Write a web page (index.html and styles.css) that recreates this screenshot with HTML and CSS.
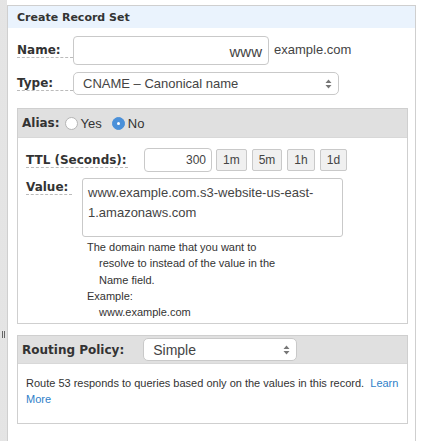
FILE: index.html
```html
<!DOCTYPE html>
<html>
<head>
<meta charset="utf-8">
<link rel="stylesheet" href="styles.css">
</head>
<body>
<div class="page">
  <div class="strip"><span class="grip"></span></div>
  <div class="panel">
    <div class="panel-head">Create Record Set</div>
    <div class="panel-body">
      <div class="row row-name">
        <span class="lbl lbl-main">Name:</span>
        <div class="input name-input">www</div>
        <span class="suffix">example.com</span>
      </div>
      <div class="row row-type">
        <span class="lbl lbl-main">Type:</span>
        <div class="select type-select"><span>CNAME – Canonical name</span><span class="arrows"><svg width="7" height="10" viewBox="0 0 7 10"><path d="M3.5 0.5 L6.5 4 H0.5 Z M3.5 9.5 L6.5 6 H0.5 Z" fill="#777"/></svg></span></div>
      </div>
      <div class="box alias-box">
        <div class="box-head">
          <span class="lbl">Alias:</span>
          <span class="radio"></span><span class="rtext">Yes</span>
          <span class="radio on"></span><span class="rtext">No</span>
        </div>
        <div class="box-body">
          <div class="row row-ttl">
            <span class="lbl ttl-lbl">TTL (Seconds):</span>
            <div class="input ttl-input">300</div>
            <div class="btns">
              <span class="btn">1m</span><span class="btn">5m</span><span class="btn">1h</span><span class="btn">1d</span>
            </div>
          </div>
          <div class="row row-value">
            <span class="lbl value-lbl">Value:</span>
            <div class="value-col">
              <div class="textarea">www.example.com.s3-website-us-east-<br>1.amazonaws.com</div>
              <div class="help">
                <p>The domain name that you want to</p>
                <p class="ind">resolve to instead of the value in the</p>
                <p class="ind">Name field.</p>
                <p>Example:</p>
                <p class="ind">www.example.com</p>
              </div>
            </div>
          </div>
        </div>
      </div>
      <div class="box routing-box">
        <div class="box-head routing-head">
          <span class="lbl">Routing Policy:</span>
          <div class="select routing-select"><span>Simple</span><span class="arrows"><svg width="7" height="10" viewBox="0 0 7 10"><path d="M3.5 0.5 L6.5 4 H0.5 Z M3.5 9.5 L6.5 6 H0.5 Z" fill="#777"/></svg></span></div>
        </div>
        <div class="routing-text">Route 53 responds to queries based only on the values in this record.&nbsp; <a class="link">Learn</a> <a class="link">More</a></div>
      </div>
    </div>
  </div>
</div>
</body>
</html>
```
FILE: styles.css
```css
html, body {
  margin: 0;
  padding: 0;
  background: #fff;
}
.page {
  display: flex;
  width: 423px;
  height: 441px;
  overflow: hidden;
  font-family: "Liberation Sans", Arial, sans-serif;
  color: #333;
}
.strip {
  width: 7px;
  flex: none;
  position: relative;
  background-color: #f3f3f3;
  background-image: radial-gradient(#dcdcdc 0.6px, transparent 0.9px);
  background-size: 2px 2px;
}
.grip {
  position: absolute;
  left: 2px;
  top: 331px;
  width: 1px;
  height: 7px;
  border-left: 1px solid #666;
  border-right: 1px solid #666;
}
.panel {
  margin-top: 5px;
  width: 407px;
  flex: none;
  border: 1px solid #cfcfcf;
  border-bottom: none;
}
.panel-head {
  height: 22px;
  background: #eaf3fd;
  font-family: "DejaVu Sans", Verdana, sans-serif;
  font-weight: bold;
  font-size: 11px;
  color: #333;
  padding-left: 9px;
  line-height: 23px;
}
.panel-body {
  padding: 8px 7px 0 9px;
}
.row {
  display: flex;
  align-items: center;
}
.lbl {
  font-family: "DejaVu Sans", Verdana, sans-serif;
  font-weight: bold;
  font-size: 12px;
  color: #333;
  border-bottom: 1px dashed #bbb;
  line-height: 14px;
}
.lbl-main {
  width: 56px;
  flex: none;
}
.input {
  box-sizing: border-box;
  border: 1px solid #c9c9c9;
  border-radius: 4px;
  background: #fff;
  font-size: 13px;
  text-align: right;
  color: #444;
}
.name-input {
  width: 196px;
  height: 29px;
  line-height: 29px;
  padding-right: 6px;
  font-size: 15px;
}
.suffix {
  margin-left: 5px;
  font-size: 13px;
  color: #444;
  margin-top: -2px;
}
.row-type {
  margin-top: 7px;
}
.select {
  box-sizing: border-box;
  display: flex;
  justify-content: space-between;
  align-items: center;
  border: 1px solid #c9c9c9;
  border-radius: 5px;
  background: #fff;
  font-size: 13px;
  color: #444;
  padding: 0 6px 0 9px;
}
.type-select {
  width: 266px;
  height: 23px;
}
.arrows {
  display: flex;
}
.box {
  border: 1px solid #cfcfcf;
  box-sizing: border-box;
  width: 391px;
}
.alias-box {
  margin-top: 13px;
  height: 216px;
}
.box-head {
  display: flex;
  align-items: center;
  height: 29px;
  padding-left: 4px;
  background-color: #ececec;
  background-image: radial-gradient(#dadada 0.6px, transparent 0.9px);
  background-size: 2px 2px;
  border-bottom: 1px solid #d8d8d8;
  box-sizing: border-box;
}
.box-head .lbl {
  border-bottom: none;
  font-size: 12px;
}
.radio {
  width: 13px;
  height: 13px;
  border-radius: 50%;
  border: 1px solid #b5b5b5;
  background: #fff;
  margin-left: 5px;
  box-sizing: border-box;
}
.radio.on {
  background: #4a90d9;
  border-color: #4a90d9;
  position: relative;
  margin-left: 10px;
}
.radio.on::after {
  content: "";
  position: absolute;
  left: 4px;
  top: 4px;
  width: 3px;
  height: 3px;
  border-radius: 50%;
  background: #fff;
}
.rtext {
  font-size: 13px;
  margin-left: 3px;
  color: #333;
}
.box-body {
  padding: 10px 0 0 8px;
}
.ttl-lbl {
  width: 102px;
  flex: none;
  margin-right: 16px;
}
.ttl-input {
  width: 68px;
  height: 24px;
  line-height: 22px;
  padding-right: 5px;
  font-size: 12px;
}
.btns {
  display: flex;
  gap: 5px;
  margin-left: 4px;
}
.btn {
  box-sizing: border-box;
  height: 22px;
  line-height: 20px;
  padding: 0 6px;
  border: 1px solid #c9c9c9;
  border-radius: 2px;
  background: #f0f0f0;
  font-size: 12px;
  color: #444;
}
.row-value {
  align-items: flex-start;
  margin-top: 6px;
}
.value-lbl {
  width: 46px;
  flex: none;
  margin-top: 2px;
  margin-right: 10px;
}
.textarea {
  box-sizing: border-box;
  width: 261px;
  height: 59px;
  border: 1px solid #c9c9c9;
  border-radius: 3px;
  padding: 4px 5px 0 5px;
  font-size: 13px;
  line-height: 20px;
  color: #444;
}
.help {
  padding: 2px 0 0 5px;
  font-size: 11px;
  line-height: 16.3px;
  color: #333;
}
.help p {
  margin: 0;
}
.help .ind {
  padding-left: 12px;
}
.routing-box {
  margin-top: 11px;
  height: 89px;
}
.routing-head {
  height: 28px;
  background-color: #ececec;
}
.routing-select {
  width: 154px;
  height: 23px;
  margin-left: 19px;
  font-size: 14px;
}
.routing-text {
  padding: 11px 8px 0 8px;
  font-size: 11px;
  line-height: 16px;
  color: #333;
}
.link {
  color: #2f7fc9;
}
```
